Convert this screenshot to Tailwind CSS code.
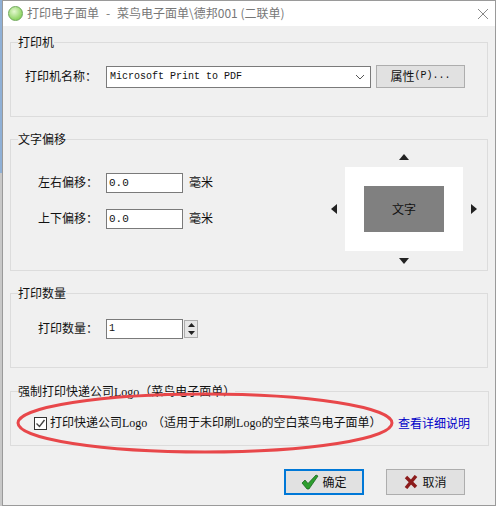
<!DOCTYPE html>
<html lang="en">
<head>
  <meta charset="UTF-8">
  <title>打印电子面单</title>
  <script src="https://cdn.jsdelivr.net/npm/@tailwindcss/browser@4"></script>
</head>
<body class="bg-white text-[12px] leading-[16px] text-[#111] font-['Noto_Sans_CJK_SC','Liberation_Sans',sans-serif] overflow-hidden">
  <div class="relative w-[499px] h-[509px] pr-[3px] pb-[3px] flex">
    <!-- sliver of the window behind -->
    <div class="w-[2px] shrink-0 flex flex-col">
      <div class="h-[173px] bg-[#8fb0d6]"></div>
      <div class="flex-1 bg-[#c8c8c8]"></div>
    </div>
    <!-- window -->
    <div class="flex-1 min-w-0 flex flex-col border border-[#9a9a9a] bg-[#f0f0f0]">
      <!-- title bar -->
      <div class="h-[25px] shrink-0 bg-white flex items-center pl-[5px] pr-[6px]">
        <span class="w-[15px] h-[15px] rounded-full border border-[#6fa85a] bg-[radial-gradient(circle_at_40%_35%,#e4f8d0,#8fd464_70%)]"></span>
        <span class="ml-[4px] pb-[2px] text-[#777] whitespace-nowrap">打印电子面单<span class="inline-block w-[18px] text-center">-</span>菜鸟电子面单\德邦001 (二联单)</span>
        <svg class="ml-auto" width="12" height="12" viewBox="0 0 12 12"><path d="M1 1l10 10M11 1L1 11" stroke="#888" fill="none"/></svg>
      </div>

      <div class="flex-1 flex flex-col pl-[7px] pr-[7px]">
        <!-- printer -->
        <fieldset class="h-[83px] mt-[8px] border border-[#dcdcdc] pl-[7px] pt-0">
          <legend class="px-0 text-[12px]">打印机</legend>
          <div class="flex items-center mt-[15px]">
            <span class="w-[88px] pl-[7px] pb-[2px]">打印机名称：</span>
            <div class="w-[265px] h-[22px] bg-white border border-[#7a7a7a] flex items-center pl-[3px] pr-[5px] font-['Liberation_Mono',monospace] text-[10px]">
              <span>Microsoft Print to PDF</span>
              <svg class="ml-auto" width="10" height="6" viewBox="0 0 10 6"><path d="M1 1l4 4 4-4" stroke="#555" fill="none"/></svg>
            </div>
            <div class="ml-[5px] w-[89px] h-[23px] pb-[2px] bg-[#e1e1e1] border border-[#adadad] flex items-center justify-center">属性<span class="font-['Liberation_Mono',monospace] text-[10px]">(P)...</span></div>
          </div>
        </fieldset>

        <!-- offset -->
        <fieldset class="h-[140px] mt-[14px] border border-[#dcdcdc] pl-[7px]">
          <legend class="text-[12px]">文字偏移</legend>
          <div class="flex">
            <div class="flex flex-col gap-[16px] pt-[26px] w-[309px]">
              <div class="flex items-center">
                <span class="w-[88px] pl-[20px] pb-[2px]">左右偏移：</span>
                <div class="w-[77px] h-[20px] bg-white border border-[#7a7a7a] pl-[2px] flex items-center font-['Liberation_Mono',monospace] text-[11px]">0.0</div>
                <span class="ml-[6px] pb-[2px]">毫米</span>
              </div>
              <div class="flex items-center">
                <span class="w-[88px] pl-[20px] pb-[2px]">上下偏移：</span>
                <div class="w-[77px] h-[20px] bg-white border border-[#7a7a7a] pl-[2px] flex items-center font-['Liberation_Mono',monospace] text-[11px]">0.0</div>
                <span class="ml-[6px] pb-[2px]">毫米</span>
              </div>
            </div>
            <!-- preview with nudge arrows -->
            <div class="grid grid-cols-[14px_118px_14px] grid-rows-[14px_84px_14px] gap-x-[4px] gap-y-[3px] pt-[3px] place-items-center">
              <span></span>
              <svg width="10" height="6" viewBox="0 0 10 6"><path d="M5 0l5 6H0z" fill="#222"/></svg>
              <span></span>
              <svg width="6" height="10" viewBox="0 0 6 10"><path d="M0 5l6-5v10z" fill="#222"/></svg>
              <div class="w-[118px] h-[84px] bg-white flex items-center justify-center">
                <div class="w-[80px] h-[46px] bg-[#808080] flex items-center justify-center">文字</div>
              </div>
              <svg width="6" height="10" viewBox="0 0 6 10"><path d="M6 5L0 0v10z" fill="#222"/></svg>
              <span></span>
              <svg width="10" height="6" viewBox="0 0 10 6"><path d="M5 6l5-6H0z" fill="#222"/></svg>
              <span></span>
            </div>
          </div>
        </fieldset>

        <!-- count -->
        <fieldset class="h-[83px] mt-[14px] border border-[#dcdcdc] pl-[7px]">
          <legend class="text-[12px]">打印数量</legend>
          <div class="flex items-center mt-[18px]">
            <span class="w-[88px] pl-[20px] pb-[2px]">打印数量：</span>
            <div class="w-[77px] h-[20px] bg-white border border-[#7a7a7a] pl-[2px] flex items-center font-['Liberation_Mono',monospace] text-[10px]">1</div>
            <div class="ml-px w-[14px] h-[18px] border border-[#adadad] bg-[#e6e6e6] flex flex-col items-center justify-around">
              <svg width="7" height="4" viewBox="0 0 7 4"><path d="M3.5 0l3.5 4H0z" fill="#222"/></svg>
              <svg width="7" height="4" viewBox="0 0 7 4"><path d="M3.5 4L7 0H0z" fill="#222"/></svg>
            </div>
          </div>
        </fieldset>

        <!-- logo -->
        <fieldset class="h-[63px] mt-[15px] border border-[#dcdcdc] pl-[7px] mr-[-1px]">
          <legend class="text-[12px]">强制打印快递公司<span class="font-['Liberation_Serif',serif]">Logo</span>（菜鸟电子面单）</legend>
          <div class="flex items-center mt-[14px]">
            <span class="ml-[16px] w-[13px] h-[13px] border border-[#333] bg-white flex items-center justify-center">
              <svg width="11" height="11" viewBox="0 0 11 11"><path d="M1.5 5.5l3 3 5-6.5" stroke="#444" stroke-width="1.4" fill="none"/></svg>
            </span>
            <span class="ml-[3px] pb-[2px] whitespace-nowrap">打印快递公司<span class="font-['Liberation_Serif',serif]">Logo</span> <span class="ml-[2px]">（适用于未印刷</span><span class="font-['Liberation_Serif',serif]">Logo</span>的空白菜鸟电子面单）</span>
            <span class="ml-auto mr-[18px] pb-[2px] text-[#0000c8] whitespace-nowrap">查看详细说明</span>
          </div>
        </fieldset>

        <!-- buttons -->
        <div class="flex justify-end gap-[22px] mt-[23px] pr-[23px]">
          <div class="w-[80px] h-[26px] bg-[#e1e1e1] border-2 border-[#0078d7] flex items-center justify-center gap-[3px]">
            <svg width="18" height="16" viewBox="0 0 18 16"><path d="M1 9l3-3 3 3.5L15 1l2 1-9 13H6z" fill="#2e9e2e" stroke="#0d5c16" stroke-width=".7"/></svg>
            <span>确定</span>
          </div>
          <div class="w-[79px] h-[26px] bg-[#e1e1e1] border border-[#adadad] flex items-center justify-center gap-[4px]">
            <svg width="14" height="14" viewBox="0 0 14 14"><path d="M2 2l10 10M12 1L2 13" stroke="#8c1c1c" stroke-width="3.4" fill="none"/></svg>
            <span>取消</span>
          </div>
        </div>
      </div>
    </div>

    <!-- red hand-drawn ellipse on top of the screenshot -->
    <svg class="absolute left-0 top-0 pointer-events-none" width="499" height="509" viewBox="0 0 499 509">
      <ellipse cx="205" cy="423" rx="187" ry="29" fill="none" stroke="#e8474a" stroke-width="3"/>
    </svg>
  </div>
</body>
</html>
